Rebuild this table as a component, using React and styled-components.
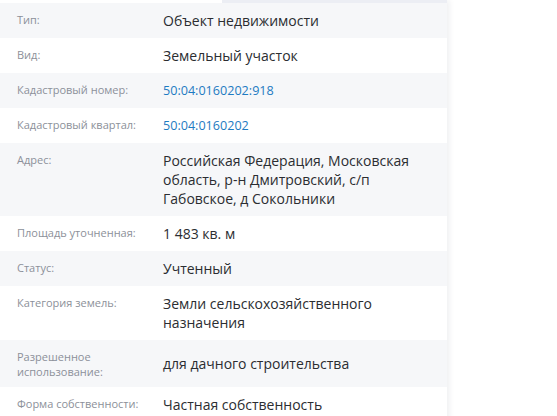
import styled, { createGlobalStyle } from "styled-components";

const Global = createGlobalStyle`
  body {
    margin: 0;
    background: #fff;
    font-family: "Open Sans", "Noto Sans", sans-serif;
  }
`;

const Page = styled.div`
  width: 557px;
  height: 416px;
  overflow: hidden;
  background: #fff;
`;

const Panel = styled.div`
  width: 447px;
  min-height: 416px;
  background: #fff;
  box-shadow: 2px 0 6px rgba(30, 40, 60, 0.08);
  display: flex;
  flex-direction: column;
`;

const TopStrip = styled.div`
  height: 3px;
  margin-left: 222px;
  background: #eceef4;
`;

const Row = styled.div`
  display: grid;
  grid-template-columns: 146px 1fr;
  align-items: ${(p) => (p.$center ? "center" : "start")};
  padding: 8px 20px 8px 17px;
  background: ${(p) => (p.$alt ? "#f6f7f9" : "#fff")};
`;

const Label = styled.div`
  font-size: 11px;
  line-height: 15px;
  color: #8c9099;
  padding-top: 1px;
  padding-right: 10px;
`;

const Value = styled.div`
  font-size: 14px;
  line-height: 19px;
  height: auto;
  color: #2b2d31;
`;

const Link = styled.a`
  display: inline-block;
  vertical-align: top;
  font-size: 12.6px;
  line-height: 19px;
  color: #1e7bc2;
  text-decoration: none;
`;

const rows = [
  ["Тип:", "Объект недвижимости"],
  ["Вид:", "Земельный участок"],
  ["Кадастровый номер:", "50:04:0160202:918", true],
  ["Кадастровый квартал:", "50:04:0160202", true],
  ["Адрес:", "Российская Федерация, Московская область, р-н Дмитровский, с/п Габовское, д Сокольники"],
  ["Площадь уточненная:", "1 483 кв. м"],
  ["Статус:", "Учтенный"],
  ["Категория земель:", "Земли сельскохозяйственного назначения"],
  ["Разрешенное использование:", "для дачного строительства", false, true],
  ["Форма собственности:", "Частная собственность"],
];

export default function App() {
  return (
    <Page>
      <Global />
      <Panel>
        <TopStrip />
        {rows.map(([label, value, link, center], i) => (
          <Row key={label} $alt={i % 2 === 0} $center={center}>
            <Label>{label}</Label>
            <Value>{link ? <Link href="#">{value}</Link> : value}</Value>
          </Row>
        ))}
      </Panel>
    </Page>
  );
}
